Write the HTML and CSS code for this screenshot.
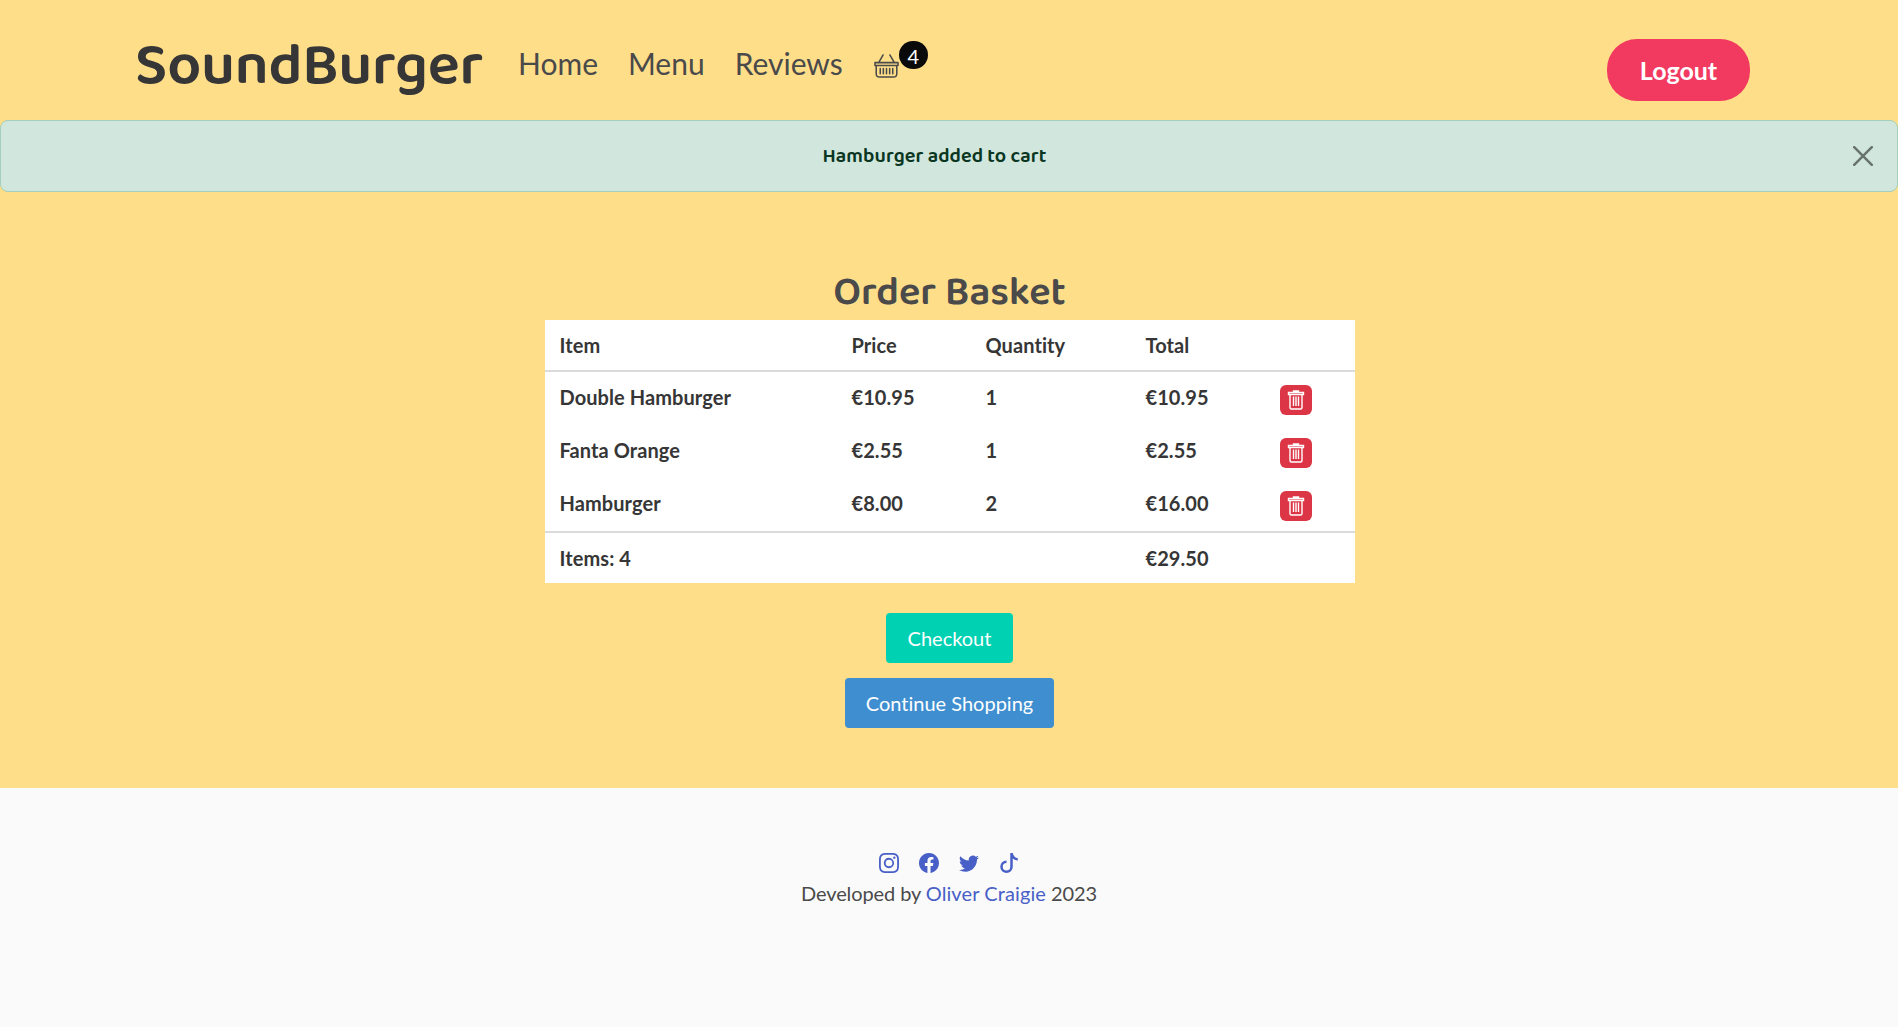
FILE: index.html
```html
<!DOCTYPE html>
<html lang="en">
<head>
<meta charset="utf-8">
<title>SoundBurger - Order Basket</title>
<link rel="stylesheet" href="styles.css">
</head>
<body>
<svg class="sprite" aria-hidden="true">
  <symbol id="trash" viewBox="0 0 18 20">
    <path d="M1.500 2.500h15v2h-15zM6.500 2V1h5v1M3 5v12.500q0 1.500 1.500 1.500h9q1.500 0 1.500-1.500V5M6.500 6.500V16M9 6.500V16M11.500 6.500V16" fill="none" stroke="currentColor" stroke-width="1.400"/>
  </symbol>
</svg>
<header class="navbar">
  <a class="brand" href="#">SoundBurger</a>
  <nav class="links">
    <a href="#">Home</a>
    <a href="#">Menu</a>
    <a href="#">Reviews</a>
    <a class="basket" href="#" aria-label="Basket">
      <svg width="25" height="26" viewBox="0 0 26 26" fill="none" stroke="currentColor" stroke-width="1.600" stroke-linecap="round" stroke-linejoin="round">
        <path d="M5 9.300 9.500 1.500M21 9.300 16.500 1.500M1 9.500h24v3H1zM2.300 12.700V21q0 3.500 3.500 3.500h14.400q3.500 0 3.500-3.500v-8.300M6.500 15.500v5.500M9.700 15.500v5.500M13 15.500v5.500M16.300 15.500v5.500M19.500 15.500v5.500"/>
      </svg>
      <span class="count">4</span>
    </a>
  </nav>
  <a class="logout" href="#">Logout</a>
</header>
<div class="alert-area">
  <div class="alert" role="alert">
    <span class="message">Hamburger added to cart</span>
    <button class="close" aria-label="Close">
      <svg width="20" height="20" viewBox="0 0 20 20"><path d="M1.200 1.200 18.800 18.800M18.800 1.200 1.200 18.800" stroke="currentColor" stroke-width="2.500" stroke-linecap="round"/></svg>
    </button>
  </div>
</div>
<main class="order">
  <h1>Order Basket</h1>
  <table>
    <colgroup><col class="c-item"><col class="c-price"><col class="c-qty"><col class="c-total"><col></colgroup>
    <thead><tr><th>Item</th><th>Price</th><th>Quantity</th><th>Total</th><th></th></tr></thead>
    <tbody>
      <tr><td>Double Hamburger</td><td>€10.95</td><td>1</td><td>€10.95</td><td><button class="delete" aria-label="Remove"><svg width="18" height="20"><use href="#trash"/></svg></button></td></tr>
      <tr><td>Fanta Orange</td><td>€2.55</td><td>1</td><td>€2.55</td><td><button class="delete" aria-label="Remove"><svg width="18" height="20"><use href="#trash"/></svg></button></td></tr>
      <tr><td>Hamburger</td><td>€8.00</td><td>2</td><td>€16.00</td><td><button class="delete" aria-label="Remove"><svg width="18" height="20"><use href="#trash"/></svg></button></td></tr>
    </tbody>
    <tfoot><tr><td>Items: 4</td><td></td><td></td><td>€29.50</td><td></td></tr></tfoot>
  </table>
  <a class="button checkout" href="#">Checkout</a>
  <a class="button continue" href="#">Continue Shopping</a>
</main>
<footer class="footer">
  <div class="social">
    <a href="#" aria-label="Instagram"><svg width="20" height="20" viewBox="0 0 16 16" fill="currentColor"><path d="M8 0C5.829 0 5.556.01 4.703.048 3.850.088 3.269.222 2.760.420a3.900 3.900 0 0 0-1.417.923A3.900 3.900 0 0 0 .420 2.760C.222 3.268.087 3.850.048 4.700.010 5.555 0 5.827 0 8.001c0 2.172.010 2.444.048 3.297.040.852.174 1.433.372 1.942.205.526.478.972.923 1.417.444.445.890.719 1.416.923.510.198 1.090.333 1.942.372C5.555 15.990 5.827 16 8 16s2.444-.010 3.298-.048c.851-.040 1.434-.174 1.943-.372a3.900 3.900 0 0 0 1.416-.923c.445-.445.718-.891.923-1.417.197-.509.332-1.090.372-1.942C15.990 10.445 16 10.173 16 8s-.010-2.445-.048-3.299c-.040-.851-.175-1.433-.372-1.941a3.900 3.900 0 0 0-.923-1.417A3.900 3.900 0 0 0 13.240.420c-.510-.198-1.092-.333-1.943-.372C10.443.010 10.172 0 7.998 0zm-.717 1.442h.718c2.136 0 2.389.007 3.232.046.780.035 1.204.166 1.486.275.373.145.640.319.920.599s.453.546.598.920c.110.281.240.705.275 1.485.039.843.047 1.096.047 3.231s-.008 2.389-.047 3.232c-.035.780-.166 1.203-.275 1.485a2.500 2.500 0 0 1-.599.919c-.280.280-.546.453-.920.598-.280.110-.704.240-1.485.276-.843.038-1.096.047-3.232.047s-2.390-.009-3.233-.047c-.780-.036-1.203-.166-1.485-.276a2.500 2.500 0 0 1-.920-.598 2.500 2.500 0 0 1-.600-.920c-.109-.281-.240-.705-.275-1.485-.038-.843-.046-1.096-.046-3.233s.008-2.388.046-3.231c.036-.780.166-1.204.276-1.486.145-.373.319-.640.599-.920s.546-.453.920-.598c.282-.110.705-.240 1.485-.276.738-.034 1.024-.044 2.515-.045zm4.988 1.328a.960.960 0 1 0 0 1.920.960.960 0 0 0 0-1.920m-4.270 1.122a4.109 4.109 0 1 0 0 8.217 4.109 4.109 0 0 0 0-8.217m0 1.441a2.667 2.667 0 1 1 0 5.334 2.667 2.667 0 0 1 0-5.334"/></svg></a>
    <a href="#" aria-label="Facebook"><svg width="20" height="20" viewBox="0 0 16 16" fill="currentColor"><path d="M16 8.049c0-4.446-3.582-8.050-8-8.050C3.580 0-.002 3.603-.002 8.050c0 4.017 2.926 7.347 6.750 7.951v-5.625h-2.030V8.050H6.750V6.275c0-2.017 1.195-3.131 3.022-3.131.876 0 1.791.157 1.791.157v1.980h-1.009c-.993 0-1.303.621-1.303 1.258v1.510h2.218l-.354 2.326H9.250V16c3.824-.604 6.750-3.934 6.750-7.951"/></svg></a>
    <a href="#" aria-label="Twitter"><svg width="20" height="20" viewBox="0 0 16 16" fill="currentColor"><path d="M5.026 15c6.038 0 9.341-5.003 9.341-9.334q.002-.211-.006-.422A6.700 6.700 0 0 0 16 3.542a6.700 6.700 0 0 1-1.889.518 3.300 3.300 0 0 0 1.447-1.817 6.500 6.500 0 0 1-2.087.793A3.286 3.286 0 0 0 7.875 6.030a9.320 9.320 0 0 1-6.767-3.429 3.290 3.290 0 0 0 1.018 4.382A3.300 3.300 0 0 1 .640 6.575v.045a3.290 3.290 0 0 0 2.632 3.218 3.200 3.200 0 0 1-.865.115 3 3 0 0 1-.614-.057 3.280 3.280 0 0 0 3.067 2.277A6.600 6.600 0 0 1 .780 13.580a6 6 0 0 1-.780-.045A9.340 9.340 0 0 0 5.026 15"/></svg></a>
    <a href="#" aria-label="TikTok"><svg width="20" height="20" viewBox="0 0 16 16" fill="currentColor"><path d="M9 0h1.980c.144.715.540 1.617 1.235 2.512C12.895 3.389 13.797 4 15 4v2c-1.753 0-3.070-.814-4-1.829V11a5 5 0 1 1-5-5v2a3 3 0 1 0 3 3z"/></svg></a>
  </div>
  <p>Developed by <a href="#">Oliver Craigie</a> 2023</p>
</footer>
</body>
</html>
```
FILE: styles.css
```css
* { box-sizing: border-box; }
html, body { margin: 0; min-height: 100%; }
body {
  background: #fafafa;
  color: #4a4a4a;
  font: 20px/30px Lato, sans-serif;
  font-variant-ligatures: none;
}
a { color: inherit; text-decoration: none; }
button { border: 0; padding: 0; color: inherit; background: none; }
svg { display: block; }
.sprite { position: absolute; width: 0; height: 0; }

.navbar {
  display: flex;
  height: 120px;
  padding: 0 148px 0 135px;
  background: #ffde8a;
}
.brand, .message, h1 {
  font-family: "Baloo 2", "Noto Sans", sans-serif;
  font-weight: 600;
}
.brand {
  width: 383px;
  padding-top: 31px;
  font-size: 60px;
  line-height: 70px;
  letter-spacing: -.2px;
  color: #363636;
}
.links {
  display: flex;
  gap: 30px;
  padding-top: 41px;
  font-size: 30px;
  line-height: 45px;
}
.basket { display: flex; margin-left: 1px; }
.basket svg { margin-top: 12px; }
.count {
  width: 29px;
  height: 28px;
  border-radius: 14px;
  background: #0a0a0a;
  color: #fff;
  font-size: 20px;
  line-height: 30px;
  text-align: center;
}
.logout {
  width: 143px;
  height: 62px;
  margin: 39px 0 0 auto;
  border-radius: 30px;
  background: #f23a60;
  color: #fff;
  font-size: 25px;
  font-weight: 700;
  line-height: 62px;
  text-align: center;
}

.alert-area { background: #ffde8a; }
.alert {
  display: flex;
  align-items: center;
  height: 72px;
  padding: 0 24px 0 15px;
  border: 1px solid #a3cfbb;
  border-radius: 8px;
  background: #d1e7dd;
  color: #0a3622;
}
.message {
  flex: 1;
  padding-bottom: 1px;
  font-size: 20px;
  letter-spacing: .1px;
  text-align: center;
}
.close { color: #68736e; }

.order {
  display: flex;
  flex-direction: column;
  align-items: center;
  height: 596px;
  padding: 76px 0 0 1px;
  background: #ffde8a;
}
h1 {
  margin: 0 0 2px;
  font-size: 40px;
  line-height: 50px;
  word-spacing: 1px;
}
table {
  width: 810px;
  margin-bottom: 30px;
  table-layout: fixed;
  border-collapse: separate;
  border-spacing: 0;
  background: #fff;
  color: #363636;
  font-weight: 700;
  letter-spacing: .08px;
}
.c-item { width: 292px; }
.c-price { width: 134px; }
.c-qty { width: 160px; }
.c-total { width: 134px; }
th, td {
  height: 53px;
  padding: 10px 15px;
  text-align: left;
  vertical-align: top;
}
th { height: 52px; border-bottom: 2px solid #dbdbdb; font-weight: inherit; }
tfoot td { height: 52px; border-top: 2px solid #dbdbdb; }
.delete {
  display: grid;
  place-items: center;
  width: 32px;
  height: 30px;
  margin-top: 3px;
  border-radius: 6px;
  background: #dc3545;
  color: #fff;
}
.button {
  height: 50px;
  padding: 10px 0;
  border-radius: 4px;
  color: #fff;
  text-align: center;
}
.checkout { width: 127px; margin-bottom: 15px; background: #00d1b2; }
.continue { width: 209px; background: #3e8ed0; }

.footer { padding-top: 65px; text-align: center; }
.social {
  display: flex;
  justify-content: center;
  gap: 20px;
  margin-bottom: 5px;
}
.footer a { color: #485fc7; }
.footer p { margin: 0; letter-spacing: -.1px; }
.footer p a { letter-spacing: .1px; }
```
